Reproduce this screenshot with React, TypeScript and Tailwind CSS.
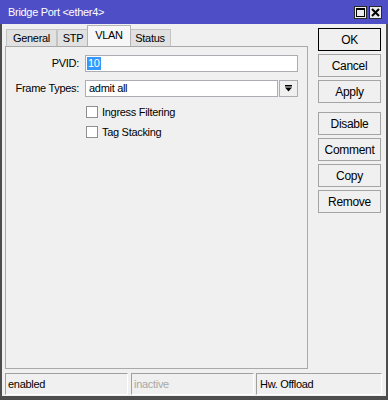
import React from "react";

const buttons = ["Cancel", "Apply"];
const buttons2 = ["Disable", "Comment", "Copy", "Remove"];

function Tab({ label, active, w }: { label: string; active?: boolean; w: string }) {
  if (active) {
    return (
      <div
        className={`${w} h-[21px] -mx-[2px] relative z-10 bg-[#f7f7f7] border border-b-0 border-[#b4b4b4] flex items-center justify-center pb-[2px]`}
      >
        {label}
      </div>
    );
  }
  return (
    <div
      className={`${w} h-[17px] bg-[#e1e1e1] border border-b-0 border-[#c4c4c4] flex items-center justify-center`}
    >
      {label}
    </div>
  );
}

function SideButton({ label, primary }: { label: string; primary?: boolean }) {
  return (
    <div
      className={`w-[63px] h-[23px] flex items-center justify-center bg-[#f0f0f0] border ${
        primary ? "border-black" : "border-[#a4a4a4]"
      } text-[12px]`}
    >
      {label}
    </div>
  );
}

function Check({ label }: { label: string }) {
  return (
    <div className="h-[20px] flex items-center">
      <div className="w-[12px] h-[12px] bg-white border border-[#8e8f8f] ml-[1px]" />
      <span className="ml-[4px]">{label}</span>
    </div>
  );
}

export default function App() {
  return (
    <div className="w-[388px] h-[400px] flex flex-col bg-[#f0f0f0] text-black text-[11px] tracking-[-0.3px] font-['Liberation_Sans',Arial,sans-serif] overflow-hidden">
      {/* title bar */}
      <div className="h-[24px] shrink-0 bg-[#4e4ec6] flex items-center pl-[8px] pr-[6px]">
        <span className="text-white text-[11px] pt-[1px]">Bridge Port &lt;ether4&gt;</span>
        <div className="ml-auto flex gap-[2px]">
          <div className="w-[13px] h-[13px] bg-[#ececec] border border-[#2a2a2a] flex items-center justify-center">
            <svg width="9" height="9" viewBox="0 0 9 9">
              <rect x="0.5" y="0.5" width="8" height="8" fill="none" stroke="#000" />
              <rect x="0" y="0" width="9" height="2" fill="#000" />
            </svg>
          </div>
          <div className="w-[13px] h-[13px] bg-[#ececec] border border-[#2a2a2a] flex items-center justify-center">
            <svg width="9" height="9" viewBox="0 0 9 9">
              <path d="M1 1 L8 8 M8 1 L1 8" stroke="#000" strokeWidth="2" />
            </svg>
          </div>
        </div>
      </div>

      {/* window body */}
      <div className="flex-1 flex flex-col border-x-2 border-b-4 border-[#4d4d4d]">
        <div className="flex pl-[3px] pt-[2px] gap-[10px]">
          {/* left: tabs + panel */}
          <div className="w-[303px] flex flex-col">
            <div className="h-[20px] flex items-end pl-[1px]">
              <Tab label="General" w="w-[51px]" />
              <Tab label="STP" w="w-[32px]" />
              <Tab label="VLAN" active w="w-[44px]" />
              <Tab label="Status" w="w-[42px]" />
            </div>
            <div className="h-[323px] border border-[#a9a9a9] bg-[#f0f0f0] pt-[8px] pr-[9px]">
              <div className="flex items-center h-[17px]">
                <div className="w-[73px] text-right">PVID:</div>
                <div className="ml-[6px] flex-1 h-[17px] bg-white border border-[#abadb3] flex items-center pl-[1px]">
                  <span className="bg-[#3399ff] text-white px-[1px] leading-[13px]">10</span>
                </div>
              </div>
              <div className="flex items-center h-[17px] mt-[8px]">
                <div className="w-[73px] text-right">Frame Types:</div>
                <div className="ml-[6px] flex-1 h-[17px] bg-white border border-[#abadb3] flex items-center pl-[3px]">
                  admit all
                </div>
                <div className="ml-[1px] w-[19px] h-[17px] bg-[#f0f0f0] border border-[#abadb3] flex items-center justify-center">
                  <svg width="7" height="7" viewBox="0 0 7 7">
                    <rect x="0" y="0" width="7" height="1.5" fill="#000" />
                    <path d="M0 2.5 H7 L3.5 6.5 Z" fill="#000" />
                  </svg>
                </div>
              </div>
              <div className="pl-[79px] mt-[5px]">
                <Check label="Ingress Filtering" />
                <Check label="Tag Stacking" />
              </div>
            </div>
          </div>

          {/* right: buttons */}
          <div className="flex flex-col pt-[2px] gap-[3px]">
            <SideButton label="OK" primary />
            {buttons.map((b) => (
              <SideButton key={b} label={b} />
            ))}
            <div className="h-[3px]" />
            {buttons2.map((b) => (
              <SideButton key={b} label={b} />
            ))}
          </div>
        </div>

        {/* status bar */}
        <div className="flex pl-[3px] mt-[4px] h-[22px]">
          <div className="w-[123px] h-[22px] border border-t-[#a0a0a0] border-l-[#a0a0a0] border-r-[#ffffff] border-b-[#ffffff] flex items-center pl-[2px]">
            enabled
          </div>
          <div className="ml-[3px] w-[123px] h-[22px] border border-t-[#a0a0a0] border-l-[#a0a0a0] border-r-[#ffffff] border-b-[#ffffff] flex items-center pl-[2px] text-[#a8a8a8]">
            inactive
          </div>
          <div className="ml-[2px] w-[126px] h-[22px] border border-t-[#a0a0a0] border-l-[#a0a0a0] border-r-[#ffffff] border-b-[#ffffff] flex items-center pl-[3px]">
            Hw. Offload
          </div>
        </div>
      </div>
    </div>
  );
}
